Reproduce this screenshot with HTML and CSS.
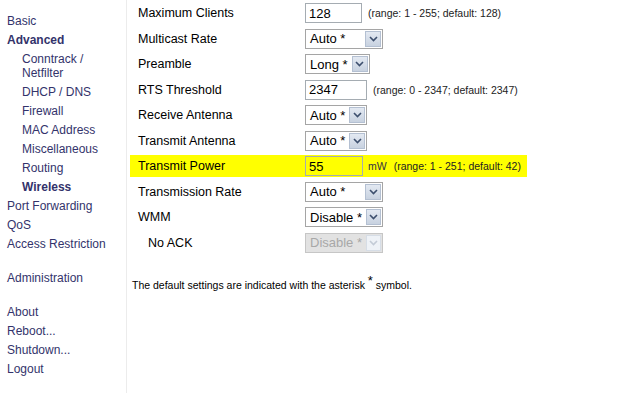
FILE: index.html
```html
<!DOCTYPE html>
<html lang="en">
<head>
    <meta charset="UTF-8">
    <title>Advanced: Wireless</title>
    <link rel="stylesheet" href="styles.css">
</head>
<body>

<div class="page">
    <div class="navi">
        <a class="nav">Basic</a>
        <a class="nav active">Advanced</a>
        <a class="nav sub">Conntrack / Netfilter</a>
        <a class="nav sub">DHCP / DNS</a>
        <a class="nav sub">Firewall</a>
        <a class="nav sub">MAC Address</a>
        <a class="nav sub">Miscellaneous</a>
        <a class="nav sub">Routing</a>
        <a class="nav sub active">Wireless</a>
        <a class="nav">Port Forwarding</a>
        <a class="nav">QoS</a>
        <a class="nav">Access Restriction</a>
        <a class="nav group">Administration</a>
        <a class="nav group">About</a>
        <a class="nav">Reboot...</a>
        <a class="nav">Shutdown...</a>
        <a class="nav">Logout</a>
    </div>

    <div class="content">
        <div class="form">
            <div class="row">
                <div class="label">Maximum Clients</div>
                <div class="field"><input class="txt w57" type="text" value="128"><span class="hint">(range: 1 - 255; default: 128)</span></div>
            </div>
            <div class="row">
                <div class="label">Multicast Rate</div>
                <div class="field"><div class="sel wide"><span class="val">Auto *</span><span class="btn"><svg width="9" height="6" viewBox="0 0 9 6"><polyline points="1,1 4.5,4.5 8,1" fill="none" stroke="#3d4f6e" stroke-width="1.6"/></svg></span></div></div>
            </div>
            <div class="row">
                <div class="label">Preamble</div>
                <div class="field"><div class="sel"><span class="val">Long *</span><span class="btn"><svg width="9" height="6" viewBox="0 0 9 6"><polyline points="1,1 4.5,4.5 8,1" fill="none" stroke="#3d4f6e" stroke-width="1.6"/></svg></span></div></div>
            </div>
            <div class="row">
                <div class="label">RTS Threshold</div>
                <div class="field"><input class="txt w62" type="text" value="2347"><span class="hint">(range: 0 - 2347; default: 2347)</span></div>
            </div>
            <div class="row">
                <div class="label">Receive Antenna</div>
                <div class="field"><div class="sel"><span class="val">Auto *</span><span class="btn"><svg width="9" height="6" viewBox="0 0 9 6"><polyline points="1,1 4.5,4.5 8,1" fill="none" stroke="#3d4f6e" stroke-width="1.6"/></svg></span></div></div>
            </div>
            <div class="row">
                <div class="label">Transmit Antenna</div>
                <div class="field"><div class="sel"><span class="val">Auto *</span><span class="btn"><svg width="9" height="6" viewBox="0 0 9 6"><polyline points="1,1 4.5,4.5 8,1" fill="none" stroke="#3d4f6e" stroke-width="1.6"/></svg></span></div></div>
            </div>
            <div class="row highlight">
                <div class="label">Transmit Power</div>
                <div class="field"><input class="txt w58" type="text" value="55"><span class="unit">mW</span><span class="hint">(range: 1 - 251; default: 42)</span></div>
            </div>
            <div class="row">
                <div class="label">Transmission Rate</div>
                <div class="field"><div class="sel wide"><span class="val">Auto *</span><span class="btn"><svg width="9" height="6" viewBox="0 0 9 6"><polyline points="1,1 4.5,4.5 8,1" fill="none" stroke="#3d4f6e" stroke-width="1.6"/></svg></span></div></div>
            </div>
            <div class="row">
                <div class="label">WMM</div>
                <div class="field"><div class="sel wide"><span class="val">Disable *</span><span class="btn"><svg width="9" height="6" viewBox="0 0 9 6"><polyline points="1,1 4.5,4.5 8,1" fill="none" stroke="#3d4f6e" stroke-width="1.6"/></svg></span></div></div>
            </div>
            <div class="row">
                <div class="label indent">No ACK</div>
                <div class="field"><div class="sel wide disabled"><span class="val">Disable *</span><span class="btn"><svg width="9" height="6" viewBox="0 0 9 6"><polyline points="1,1 4.5,4.5 8,1" fill="none" stroke="#c3cbd6" stroke-width="1.6"/></svg></span></div></div>
            </div>
        </div>

        <p class="note">The default settings are indicated with the asterisk <sup>*</sup> symbol.</p>
    </div>
</div>

</body>
</html>
```

FILE: styles.css
```css
html, body {
    margin: 0;
    height: 100%;
    background: #fff;
}
body {
    font-family: 'Liberation Sans', Arial, sans-serif;
    font-size: 12px;
    color: #000;
}
.page {
    display: flex;
    min-height: 393px;
}
.navi {
    width: 119px;
    padding: 14px 0 0 7px;
    border-right: 1px solid #ececec;
    flex-shrink: 0;
}
.nav {
    display: block;
    color: #33336b;
    line-height: 14px;
    padding-bottom: 5px;
    text-decoration: none;
}
.nav.sub {
    padding-left: 15px;
}
.nav.active {
    font-weight: bold;
}
.nav.group {
    margin-top: 15px;
}
.content {
    padding: 2px 0 0 3px;
}
.form {
    width: 397px;
}
.row {
    display: grid;
    grid-template-columns: 175px auto;
    align-items: center;
    height: 22px;
    margin-bottom: 3.5px;
}
.row.highlight {
    background: #ffff00;
}
.label {
    padding-left: 8px;
    font-size: 12.5px;
}
.label.indent {
    padding-left: 18px;
}
.field {
    display: flex;
    align-items: center;
}
.txt {
    box-sizing: border-box;
    height: 20px;
    border: 1px solid #a5acb2;
    padding: 0 3px;
    margin: 0;
    font-family: inherit;
    font-size: 13px;
    color: #000;
    background: #fff;
    outline: none;
}
.highlight .txt {
    background: #ffff00;
}
.w57 { width: 57px; }
.w58 { width: 58px; }
.w62 { width: 62px; }
.hint {
    font-size: 10.5px;
    color: #222;
    margin-left: 6px;
}
.unit {
    font-size: 10.5px;
    color: #334;
    margin-left: 5px;
}
.unit + .hint {
    margin-left: 7px;
}
.sel {
    box-sizing: border-box;
    height: 20px;
    display: inline-flex;
    align-items: center;
    border: 1px solid #a5a5a5;
    background: #fff;
    padding: 1px;
}
.sel.wide {
    width: 78px;
}
.sel .val {
    flex: 1;
    padding: 0 4px 0 3px;
    font-size: 13px;
    white-space: nowrap;
}
.sel .btn {
    box-sizing: border-box;
    width: 16px;
    height: 16px;
    display: flex;
    align-items: center;
    justify-content: center;
    border: 1px solid #b4c0d2;
    background: linear-gradient(#e3e9f2, #c8d2e0);
}
.sel.disabled {
    background: #e2e2e2;
    border-color: #c6c6c6;
}
.sel.disabled .val {
    color: #a8a8a8;
}
.sel.disabled .btn {
    border-color: #d6dde6;
    background: #eef2f7;
}
.note {
    margin: 25px 0 0 2px;
    font-size: 10.5px;
}
.note sup {
    font-size: 13px;
    line-height: 0;
}
```
